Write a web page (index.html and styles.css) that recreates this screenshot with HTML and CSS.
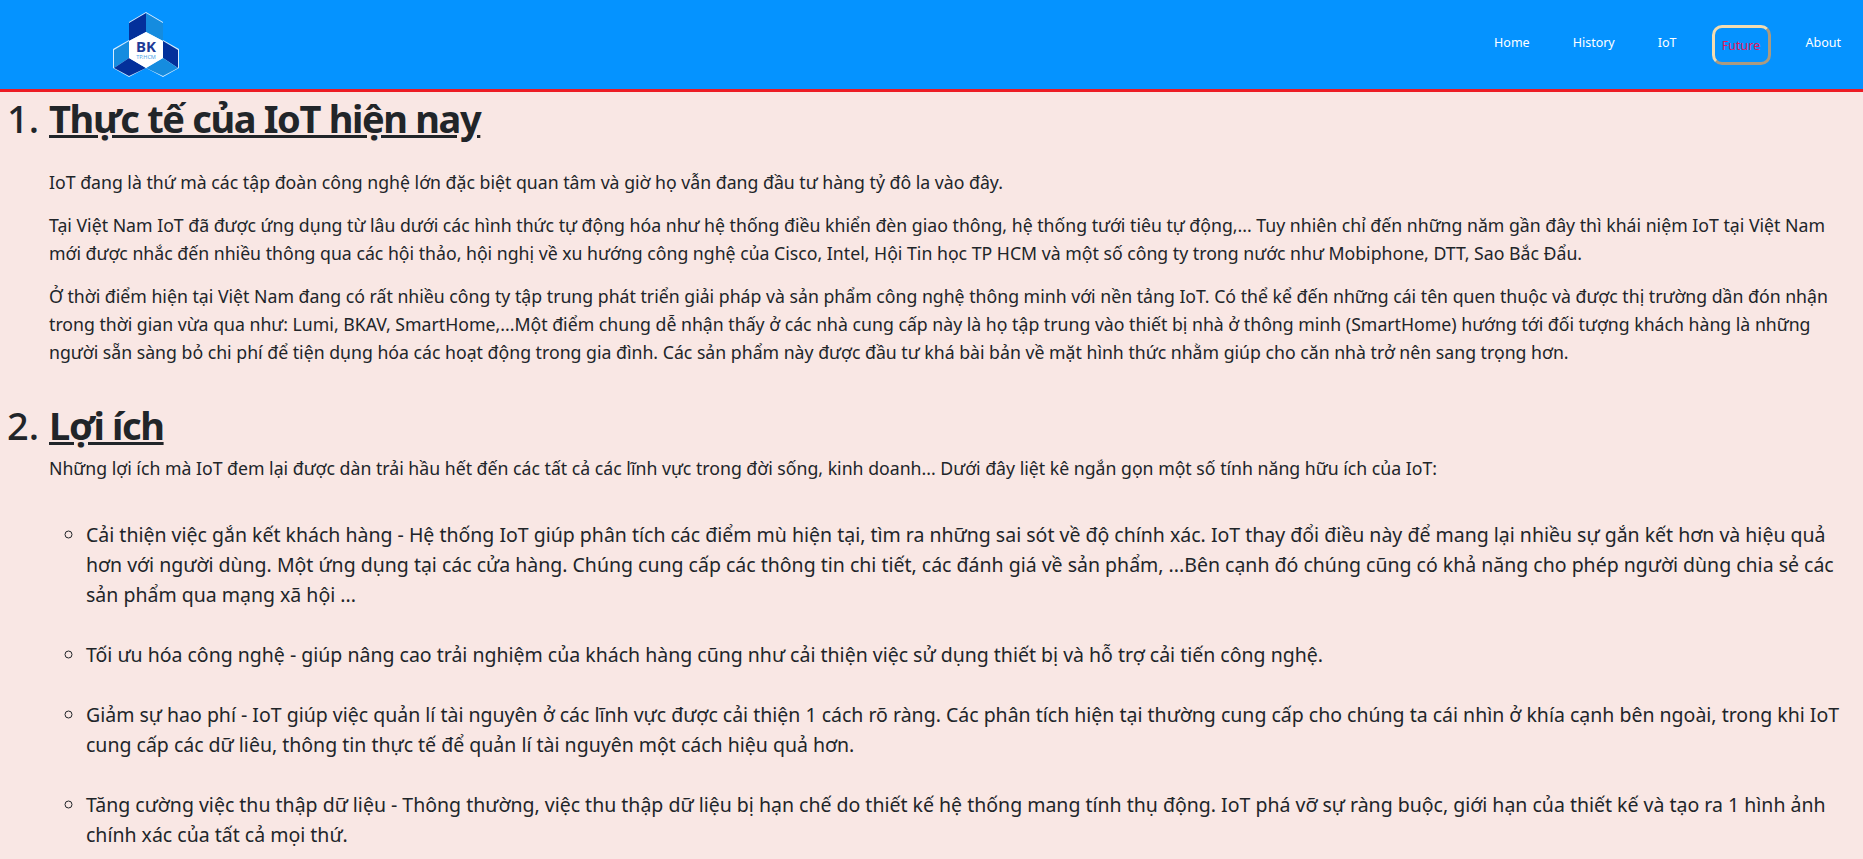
FILE: index.html
```html
<!DOCTYPE html>
<html>
<head>
    <title>IoT - Future</title>
    <link rel="stylesheet" href="styles.css">
</head>
<body>
    <header class="topbar">
        <a class="logo" href="#">
            <svg width="66" height="66" viewBox="0 0 66 66">
                <path class="edge" d="M33 0 L50 10 L50 28 L66 37 L66 56 L50 65 L33 56 L16 65 L0 56 L0 37 L16 28 L16 10 Z"/>
                <path class="dark" d="M33 1 L33 20 L16 29 L16 11 Z"/>
                <path class="light" d="M33 1 L50 11 L50 29 L33 20 Z"/>
                <path class="dark" d="M50 29 L65 38 L65 56 L50 46 Z"/>
                <path class="light" d="M50 46 L65 56 L50 64 L33 56 Z"/>
                <path class="light" d="M1 38 L16 29 L16 46 L1 56 Z"/>
                <path class="dark" d="M1 56 L16 46 L33 56 L16 64 Z"/>
                <path class="hex" d="M33 20 L50 29 L50 46 L33 56 L16 46 L16 29 Z"/>
                <text class="logo-text"><tspan class="logo-bk" x="33" y="40">BK</tspan><tspan class="logo-sub" x="33" y="46.5">TP.HCM</tspan></text>
            </svg>
        </a>
        <nav class="menu">
            <a href="#">Home</a>
            <a href="#">History</a>
            <a href="#">IoT</a>
            <a href="#" class="active">Future</a>
            <a href="#">About</a>
        </nav>
    </header>

    <main class="content">
        <ol class="sections">
            <li>
                <h2>Thực tế của IoT hiện nay</h2>
                <div class="intro first">
                    <p>IoT đang là thứ mà các tập đoàn công nghệ lớn đặc biệt quan tâm và giờ họ vẫn đang đầu tư hàng tỷ đô la vào đây.</p>
                    <p>Tại Việt Nam IoT đã được ứng dụng từ lâu dưới các hình thức tự động hóa như hệ thống điều khiển đèn giao thông, hệ thống tưới tiêu tự động,... Tuy nhiên chỉ đến những năm gần đây thì khái niệm IoT tại Việt Nam<br>mới được nhắc đến nhiều thông qua các hội thảo, hội nghị về xu hướng công nghệ của Cisco, Intel, Hội Tin học TP HCM và một số công ty trong nước như Mobiphone, DTT, Sao Bắc Đẩu.</p>
                    <p>Ở thời điểm hiện tại Việt Nam đang có rất nhiều công ty tập trung phát triển giải pháp và sản phẩm công nghệ thông minh với nền tảng IoT. Có thể kể đến những cái tên quen thuộc và được thị trường dần đón nhận<br>trong thời gian vừa qua như: Lumi, BKAV, SmartHome,...Một điểm chung dễ nhận thấy ở các nhà cung cấp này là họ tập trung vào thiết bị nhà ở thông minh (SmartHome) hướng tới đối tượng khách hàng là những<br>người sẵn sàng bỏ chi phí để tiện dụng hóa các hoạt động trong gia đình. Các sản phẩm này được đầu tư khá bài bản về mặt hình thức nhằm giúp cho căn nhà trở nên sang trọng hơn.</p>
                </div>
            </li>
            <li>
                <h2>Lợi ích</h2>
                <div class="intro">
                    <p>Những lợi ích mà IoT đem lại được dàn trải hầu hết đến các tất cả các lĩnh vực trong đời sống, kinh doanh... Dưới đây liệt kê ngắn gọn một số tính năng hữu ích của IoT:</p>
                </div>
                <ul class="benefits">
                    <li>Cải thiện việc gắn kết khách hàng - Hệ thống IoT giúp phân tích các điểm mù hiện tại, tìm ra những sai sót về độ chính xác. IoT thay đổi điều này để mang lại nhiều sự gắn kết hơn và hiệu quả<br>hơn với người dùng. Một ứng dụng tại các cửa hàng. Chúng cung cấp các thông tin chi tiết, các đánh giá về sản phẩm, ...Bên cạnh đó chúng cũng có khả năng cho phép người dùng chia sẻ các<br>sản phẩm qua mạng xã hội ...</li>
                    <li>Tối ưu hóa công nghệ - giúp nâng cao trải nghiệm của khách hàng cũng như cải thiện việc sử dụng thiết bị và hỗ trợ cải tiến công nghệ.</li>
                    <li>Giảm sự hao phí - IoT giúp việc quản lí tài nguyên ở các lĩnh vực được cải thiện 1 cách rõ ràng. Các phân tích hiện tại thường cung cấp cho chúng ta cái nhìn ở khía cạnh bên ngoài, trong khi IoT<br>cung cấp các dữ liêu, thông tin thực tế để quản lí tài nguyên một cách hiệu quả hơn.</li>
                    <li>Tăng cường việc thu thập dữ liệu - Thông thường, việc thu thập dữ liệu bị hạn chế do thiết kế hệ thống mang tính thụ động. IoT phá vỡ sự ràng buộc, giới hạn của thiết kế và tạo ra 1 hình ảnh<br>chính xác của tất cả mọi thứ.</li>
                </ul>
            </li>
        </ol>
    </main>
</body>
</html>
```

FILE: styles.css
```css
html, body {
    height: 859px;
    overflow: hidden;
}
body {
    font-family: "Noto Sans", "Open Sans", sans-serif;
    margin: 0;
    padding: 0;
    background: #f9e7e4;
    color: #212529;
}
.topbar {
    display: flex;
    justify-content: space-between;
    align-items: center;
    height: 89px;
    padding: 0 22px 0 113px;
    background: #0593ff;
    border-bottom: 3px solid #ed1c24;
}
.logo {
    display: block;
    height: 66px;
}
.logo svg {
    display: block;
}
.edge {
    fill: #d6ecff;
}
.dark {
    fill: #03309b;
}
.light {
    fill: #158cdf;
}
.hex {
    fill: #fff;
}
.logo-text {
    font-family: "Noto Sans", sans-serif;
    text-anchor: middle;
}
.logo-bk {
    font-size: 15px;
    font-weight: 700;
    fill: #1e3a96;
}
.logo-sub {
    font-size: 5.5px;
    fill: #4aa3e8;
}
.menu {
    display: flex;
    align-items: center;
    gap: 43px;
}
.menu a {
    color: #fff;
    font-size: 12.5px;
    margin-bottom: 5px;
    text-decoration: none;
}
.menu a.active {
    width: 59px;
    height: 40px;
    line-height: 36px;
    margin: 0 -8px;
    text-align: center;
    color: #e6175c;
    border: 3px solid;
    border-color: #f3dcb0 #ab9a80 #ab9a80 #f3dcb0;
    border-radius: 10px;
    box-sizing: border-box;
}
.sections {
    margin: 0;
    padding: 0 0 0 49px;
    font-size: 38px;
    font-weight: 500;
}
.sections > li {
    margin-bottom: 33px;
}
.sections h2 {
    margin: 0 0 5px;
    font-size: 38px;
    font-weight: 700;
    letter-spacing: -1.35px;
    line-height: 48px;
    text-decoration: underline;
}
.intro {
    font-weight: 400;
}
.intro.first {
    padding-top: 21px;
}
.intro p {
    margin: 0 0 15px;
    font-size: 17.7px;
    line-height: 28px;
    white-space: nowrap;
}
.benefits {
    list-style: circle;
    margin: 0;
    padding: 23px 0 0 37px;
    font-size: 19.5px;
    font-weight: 400;
    line-height: 30px;
}
.benefits li {
    margin-bottom: 30px;
    white-space: nowrap;
}
```
